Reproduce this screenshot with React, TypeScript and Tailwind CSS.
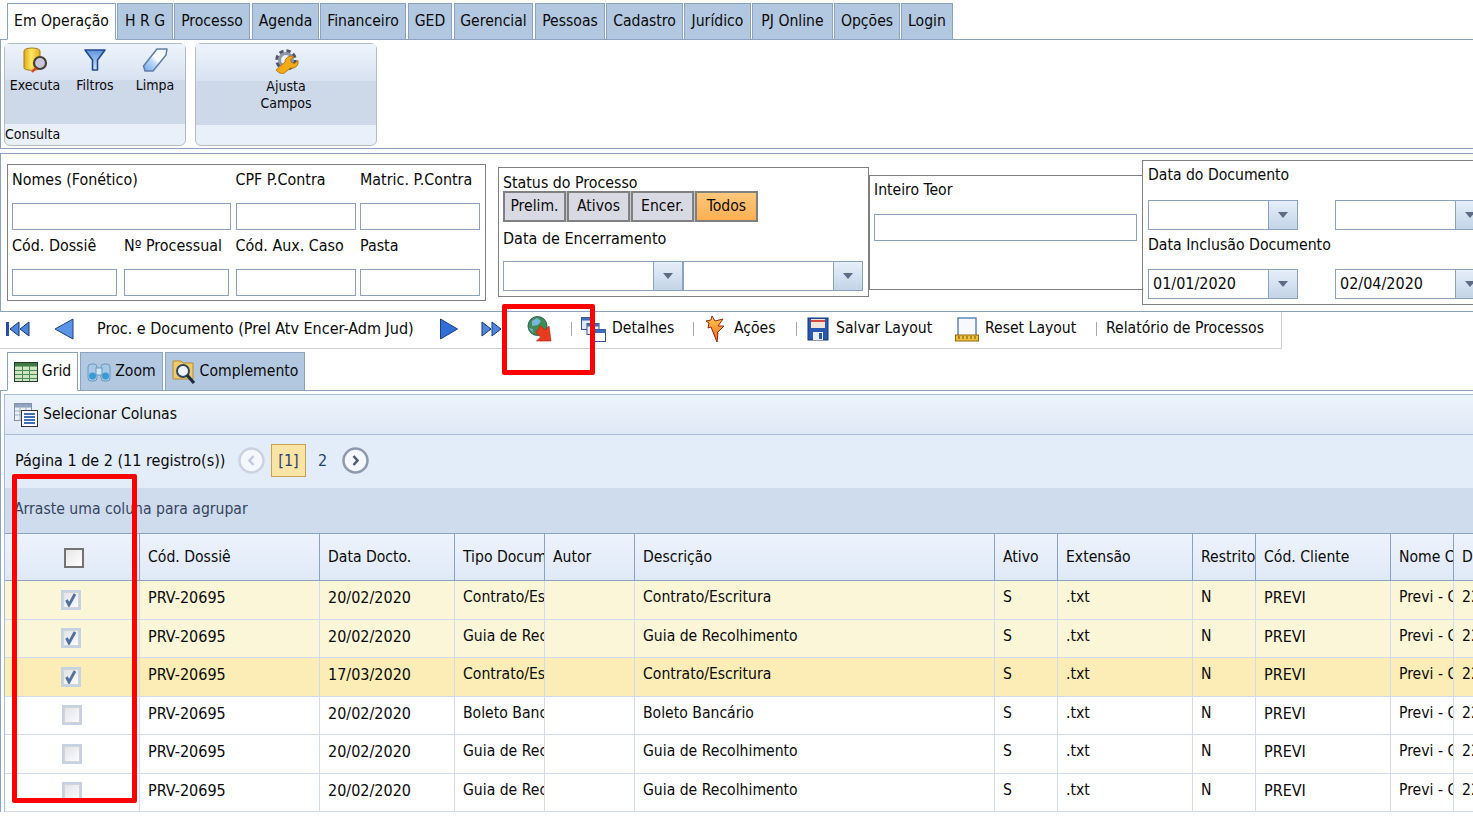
import type { ReactNode } from "react";

const navTabs = [
  { label: "Em Operação", w: "w-[109px]", active: true },
  { label: "H R G", w: "ml-px w-[56px]" },
  { label: "Processo", w: "ml-px w-[76px]" },
  { label: "Agenda", w: "ml-[2px] w-[67px]" },
  { label: "Financeiro", w: "ml-px w-[86px]" },
  { label: "GED", w: "ml-[2px] w-[44px]" },
  { label: "Gerencial", w: "ml-[2px] w-[79px]" },
  { label: "Pessoas", w: "ml-[2px] w-[70px]" },
  { label: "Cadastro", w: "ml-px w-[77px]" },
  { label: "Jurídico", w: "ml-px w-[67px]" },
  { label: "PJ Online", w: "ml-px w-[81px]" },
  { label: "Opções", w: "ml-px w-[66px]" },
  { label: "Login", w: "ml-px w-[52px]" },
];

const rows = [
  { date: "20/02/2020", tipo: "Contrato/Escritura", desc: "Contrato/Escritura", sel: 1 },
  { date: "20/02/2020", tipo: "Guia de Recolhimento", desc: "Guia de Recolhimento", sel: 1 },
  { date: "17/03/2020", tipo: "Contrato/Escritura", desc: "Contrato/Escritura", sel: 2 },
  { date: "20/02/2020", tipo: "Boleto Bancário", desc: "Boleto Bancário", sel: 0 },
  { date: "20/02/2020", tipo: "Guia de Recolhimento", desc: "Guia de Recolhimento", sel: 0 },
  { date: "20/02/2020", tipo: "Guia de Recolhimento", desc: "Guia de Recolhimento", sel: 0 },
];

const columns = [
  { label: "", w: "w-[135px]" },
  { label: "Cód. Dossiê", w: "w-[180px]" },
  { label: "Data Docto.", w: "w-[135px]" },
  { label: "Tipo Documento", w: "w-[90px]" },
  { label: "Autor", w: "w-[90px]" },
  { label: "Descrição", w: "w-[360px]" },
  { label: "Ativo", w: "w-[63px]" },
  { label: "Extensão", w: "w-[135px]" },
  { label: "Restrito", w: "w-[63px]" },
  { label: "Cód. Cliente", w: "w-[135px]" },
  { label: "Nome Cliente", w: "w-[63px]" },
  { label: "Data", w: "w-[40px]" },
];

function Arrow() {
  return (
    <span className="flex h-full w-[29px] shrink-0 items-center justify-center border-l border-[#8ba2c0] bg-gradient-to-b from-[#e6effa] to-[#c3d4e7]">
      <span className="h-0 w-0 border-x-[5px] border-t-[6px] border-x-transparent border-t-[#5f6b85]" />
    </span>
  );
}

function DateBox({ value, w }: { value?: string; w: string }) {
  return (
    <div className={`flex h-[30px] shrink-0 items-stretch border border-[#8ba2c0] bg-white text-[16px] ${w}`}>
      <span className="flex-1 px-1 leading-[28px]">{value}</span>
      <Arrow />
    </div>
  );
}

function TextBox({ w }: { w: string }) {
  return <div className={`h-[27px] shrink-0 border border-[#8ba2c0] bg-white ${w}`} />;
}

function DbIcon() {
  return (
    <svg width="26" height="26" viewBox="0 0 26 26">
      <defs>
        <linearGradient id="db" x1="0" x2="1" y1="0" y2="0">
          <stop offset="0" stopColor="#e0a820" />
          <stop offset=".45" stopColor="#ffe860" />
          <stop offset="1" stopColor="#e5ae22" />
        </linearGradient>
      </defs>
      <path d="M2 4c0-4 16-4 16 0v17c0 3-16 3-16 0z" fill="url(#db)" stroke="#a87a18" />
      <circle cx="18" cy="16" r="6" fill="#c9c8d8" stroke="#4a3f36" strokeWidth="2.2" />
      <path d="M14 21l-4 4" stroke="#d8432a" strokeWidth="2.4" />
    </svg>
  );
}

function FunnelIcon() {
  return (
    <svg width="24" height="24" viewBox="0 0 24 24">
      <defs>
        <linearGradient id="fn" x1="0" x2="0" y1="0" y2="1">
          <stop offset="0" stopColor="#5f93dc" />
          <stop offset="1" stopColor="#cfe6fb" />
        </linearGradient>
      </defs>
      <path d="M2 2h20l-7.5 10v10h-5V12z" fill="url(#fn)" stroke="#1f4a8f" strokeWidth="1.6" strokeLinejoin="round" />
    </svg>
  );
}

function EraserIcon() {
  return (
    <svg width="26" height="26" viewBox="0 0 26 26">
      <defs>
        <linearGradient id="er" x1="0" x2="1" y1="1" y2="0">
          <stop offset="0" stopColor="#6fa6e8" />
          <stop offset=".4" stopColor="#bcd8f6" />
          <stop offset=".55" stopColor="#fbfdff" />
          <stop offset="1" stopColor="#eef3fb" />
        </linearGradient>
      </defs>
      <path d="M1.500 19L15 2h10l-1 6L11 24H3z" fill="url(#er)" stroke="#5f7da5" strokeWidth="1.5" strokeLinejoin="round" />
    </svg>
  );
}

function GearIcon() {
  return (
    <svg width="26" height="26" viewBox="0 0 26 26">
      <circle cx="13" cy="12" r="8.500" fill="none" stroke="#4f5566" strokeWidth="4.500" strokeDasharray="4 2.700" />
      <circle cx="13" cy="12" r="6.500" fill="none" stroke="#8f96a8" strokeWidth="3" />
      <circle cx="13" cy="12" r="4" fill="#f4f6fa" />
      <path d="M3 22l9-8c0-4 4-7 9-5.500l-3.500 3 1 3 3 1 3.500-3c1 5-3 8.500-7.500 7.500l-6 5c-2.500 1.500-6.500-.5-8.500-3z" fill="#f4a916" stroke="#a8690c" strokeWidth=".8" />
    </svg>
  );
}

function FirstIcon() {
  return (
    <svg width="24" height="16" viewBox="0 0 24 16">
      <path d="M0 1h3v14H0z" fill="#244f9e" />
      <path d="M13 1v14L4 8zM23 1v14l-9-7z" fill="#4f86dc" stroke="#17367a" />
    </svg>
  );
}

function PrevIcon() {
  return (
    <svg width="22" height="22" viewBox="0 0 22 22">
      <path d="M20 1v20L2 11z" fill="#5b93e6" stroke="#1f3f85" strokeLinejoin="round" />
    </svg>
  );
}

function NextIcon() {
  return (
    <svg width="20" height="22" viewBox="0 0 20 22">
      <path d="M1.500 1v20L18.500 11z" fill="#2f6fd6" stroke="#1f3f85" strokeLinejoin="round" />
    </svg>
  );
}

function LastIcon() {
  return (
    <svg width="22" height="16" viewBox="0 0 22 16">
      <path d="M1 1v14l9-7zM11 1v14l9-7z" fill="#4f86dc" stroke="#17367a" />
    </svg>
  );
}

function GlobeIcon() {
  return (
    <svg width="26" height="26" viewBox="0 0 26 26">
      <circle cx="10.500" cy="10" r="9.500" fill="#3f8d55" stroke="#2c5f5a" />
      <path d="M5 5l5-3 4 3-3 4-6 1zM12 13l5 0-2 5-3-1zM1.500 12l4 1 1 4z" fill="#7cb6dc" />
      <path d="M13.500 9.500l4.500 4.500 4-4 2 15H9.500l4-4-4.500-4.500z" fill="#e83a1e" stroke="#b0200f" strokeWidth=".6" />
    </svg>
  );
}

function WindowsIcon() {
  return (
    <svg width="25" height="25" viewBox="0 0 25 25">
      <rect x=".5" y=".5" width="13" height="12" fill="#dfe7f3" stroke="#33508f" />
      <rect x=".5" y=".5" width="13" height="3" fill="#3f6cb8" />
      <rect x="6" y="6.500" width="12" height="11" fill="#eef3fa" stroke="#33508f" />
      <rect x="6" y="6.500" width="12" height="3" fill="#3f6cb8" />
      <rect x="11.500" y="12.500" width="13" height="12" fill="#ffffff" stroke="#33508f" />
      <rect x="11.500" y="12.500" width="13" height="3.500" fill="#3f6cb8" />
    </svg>
  );
}

function BoltIcon() {
  return (
    <svg width="22" height="28" viewBox="0 0 22 28">
      <defs>
        <linearGradient id="bolt" x1="0" x2="0" y1="0" y2="1">
          <stop offset="0" stopColor="#ffd34a" />
          <stop offset="1" stopColor="#ee5a22" />
        </linearGradient>
      </defs>
      <path d="M2 6l5-1 1-4 3 5 8-2-5 7 6 0-7 7 1 0-1 9-6-15-3 1 1-5z" fill="url(#bolt)" stroke="#9c2418" />
    </svg>
  );
}

function FloppyIcon() {
  return (
    <svg width="22" height="24" viewBox="0 0 22 24">
      <rect x="1" y="1" width="20" height="22" fill="#2a57b0" stroke="#143777" />
      <rect x="4" y="2" width="14" height="9" fill="#f1e4d8" />
      <rect x="4" y="3" width="14" height="2" fill="#d8483c" />
      <rect x="6" y="15" width="10" height="8" fill="#e9eef6" />
      <rect x="12" y="16" width="3" height="6" fill="#2a57b0" />
    </svg>
  );
}

function RulerIcon() {
  return (
    <svg width="24" height="25" viewBox="0 0 24 25">
      <rect x="3" y="1" width="18" height="18" fill="#f7f9fd" stroke="#5c86c2" strokeWidth="1.500" />
      <rect x=".5" y="18" width="23" height="6" fill="#f0c13a" stroke="#8f6a10" />
      <path d="M4 19v3M8 19v3M12 19v3M16 19v3M20 19v3" stroke="#6c4e08" />
    </svg>
  );
}

function GridIcon() {
  return (
    <svg width="24" height="20" viewBox="0 0 24 20">
      <rect x=".5" y=".5" width="23" height="19" fill="#cfe4c4" stroke="#26382c" />
      <rect x="1" y="1" width="22" height="3.500" fill="#3f7a45" />
      <path d="M1 8.500h22M1 12.500h22M1 16.500h22M8.500 4v15M15.500 4v15" stroke="#4b8a52" />
    </svg>
  );
}

function BinocularsIcon() {
  return (
    <svg width="24" height="22" viewBox="0 0 24 22">
      <rect x="1" y="3" width="9" height="17" rx="3" fill="#a5c9e6" stroke="#6d98bd" />
      <rect x="14" y="3" width="9" height="17" rx="3" fill="#a5c9e6" stroke="#6d98bd" />
      <rect x="9" y="7" width="6" height="7" fill="#d3e4f3" stroke="#6d98bd" />
      <circle cx="5.500" cy="15" r="3.500" fill="#3a9ad4" />
      <circle cx="18.500" cy="15" r="3.500" fill="#3a9ad4" />
    </svg>
  );
}

function FolderSearchIcon() {
  return (
    <svg width="24" height="24" viewBox="0 0 24 24">
      <path d="M1 1h8l2 2h10v16H1z" fill="#eecb6e" stroke="#b58a2a" />
      <circle cx="11" cy="11" r="6" fill="#eaf2fb" stroke="#33465e" strokeWidth="2" />
      <path d="M15 15l7 8" stroke="#1f2d40" strokeWidth="3.200" />
    </svg>
  );
}

function ColumnsIcon() {
  return (
    <svg width="24" height="24" viewBox="0 0 24 24">
      <rect x=".5" y=".5" width="17" height="17" fill="#eaf0f8" stroke="#7f90ab" />
      <rect x="1" y="1" width="16" height="3.500" fill="#8ea2c0" />
      <path d="M1 8h17M1 12h17M6 1v17M12 1v17" stroke="#a0aec4" />
      <rect x="7.500" y="7.500" width="16" height="16" fill="#ffffff" stroke="#333333" />
      <path d="M10 11h11M10 14h11M10 17h11M10 20h11" stroke="#3f6cb8" strokeWidth="2" />
    </svg>
  );
}

function RibbonButton({ icon, children, w }: { icon: ReactNode; children: ReactNode; w: string }) {
  return (
    <div className={`flex flex-col items-center ${w}`}>
      <span className="flex h-[34px] items-center">{icon}</span>
      <span className="text-center text-[14px] leading-[17px]">{children}</span>
    </div>
  );
}

function RibbonGroup({ title, children, className }: { title?: string; children: ReactNode; className: string }) {
  return (
    <div className={`flex h-[103px] w-[182px] flex-col rounded-md border border-[#b5bcc6] bg-[#e9f0fa] ${className}`}>
      <div className="h-[37px] bg-gradient-to-b from-[#edf3fb] to-[#d8e3f1]" />
      <div className="flex h-[44px] flex-none bg-[#cdd8e8]" />
      <div className="-mt-[81px] flex h-[81px] justify-center">{children}</div>
      <div className="flex-1 pt-[1px] text-[14px] leading-[22px]">{title}</div>
    </div>
  );
}

function ToolItem({ icon, label, className }: { icon: ReactNode; label: string; className: string }) {
  return (
    <div className={`flex shrink-0 items-center ${className}`}>
      {icon}
      <span>{label}</span>
    </div>
  );
}

function Sep() {
  return <span className="block h-[14px] w-px shrink-0 bg-[#a8a8a8]" />;
}

function PagerCircle({ dim, back }: { dim?: boolean; back?: boolean }) {
  return (
    <svg width="27" height="27" viewBox="0 0 27 27" className="shrink-0">
      <circle cx="13.500" cy="13.500" r="12" fill="#f4f7fc" stroke={dim ? "#c9d3e0" : "#8d99ac"} strokeWidth="2.500" />
      <path d={back ? "M15.500 9l-4 4.500 4 4.500" : "M11.500 9l4 4.500-4 4.500"} fill="none" stroke={dim ? "#c0cbda" : "#4d5a70"} strokeWidth="2.500" />
    </svg>
  );
}

function SubTab({ icon, label, w, active }: { icon: ReactNode; label: string; w: string; active?: boolean }) {
  return (
    <div className={`relative flex h-[39px] shrink-0 items-center justify-center gap-[4px] border border-[#8ba2c0] ${w} ${active ? "border-b-white bg-white" : "bg-[#b2c8e0]"}`}>
      {icon}
      <span>{label}</span>
    </div>
  );
}

function CheckBox({ checked }: { checked: boolean }) {
  return (
    <span className={`flex h-[20px] w-[20px] items-center justify-center border-2 border-[#c5d2e4] ${checked ? "" : "ml-[2px]"}`}>
      <span className="flex h-[16px] w-[16px] items-center justify-center border border-[#d2d4d8] bg-gradient-to-br from-[#e2e4e8] to-[#fbfbfc]">
        {checked && (
          <svg width="14" height="14" viewBox="0 0 14 14">
            <path d="M2.500 7l2.500 5 6-11" fill="none" stroke="#51709f" strokeWidth="2.800" />
          </svg>
        )}
      </span>
    </span>
  );
}

export default function App() {
  return (
    <div className="relative h-[816px] w-[1473px] overflow-hidden bg-white font-['DejaVu_Sans',sans-serif] text-[15.6px] text-[#0a0a0a] [font-stretch:condensed]">
      {/* top menu */}
      <div className="flex h-[40px] border-b border-[#8ba2c0] pl-[7px] pt-[3px]">
        {navTabs.map((tab) => (
          <div
            key={tab.label}
            className={`flex h-[37px] shrink-0 items-center justify-center border border-[#8ba2c0] pt-px ${tab.w} ${tab.active ? "border-b-white bg-white" : "bg-[#b2c8e0]"}`}
          >
            {tab.label}
          </div>
        ))}
      </div>

      {/* ribbon */}
      <div className="flex h-[109px] gap-[9px] border-b border-l border-[#8ba2c0] pl-[3px] pt-[3px]">
        <RibbonGroup title="Consulta" className="shrink-0">
          <RibbonButton icon={<DbIcon />} w="w-[60px]">Executa</RibbonButton>
          <RibbonButton icon={<FunnelIcon />} w="w-[60px]">Filtros</RibbonButton>
          <RibbonButton icon={<EraserIcon />} w="w-[60px]">Limpa</RibbonButton>
        </RibbonGroup>
        <RibbonGroup className="shrink-0">
          <RibbonButton icon={<GearIcon />} w="w-[80px]">Ajusta<br />Campos</RibbonButton>
        </RibbonGroup>
      </div>

      {/* filters */}
      <div className="mt-[4px] flex h-[159px] items-start border-y border-l border-[#8ba2c0] pl-[6px]">
        <div className="mt-[10px] h-[137px] w-[479px] shrink-0 border border-[#808080] pl-[4px] text-[15.9px]">
          <div className="flex h-[38px] pt-[3px]">
            <span className="w-[223.5px]">Nomes (Fonético)</span>
            <span className="w-[124.5px]">CPF P.Contra</span>
            <span>Matric. P.Contra</span>
          </div>
          <div className="flex">
            <TextBox w="w-[219px]" />
            <TextBox w="ml-[5px] w-[120px]" />
            <TextBox w="ml-[4px] w-[120px]" />
          </div>
          <div className="flex h-[39px] pt-[4px]">
            <span className="w-[112px]">Cód. Dossiê</span>
            <span className="w-[111.5px]">Nº Processual</span>
            <span className="w-[124.5px]">Cód. Aux. Caso</span>
            <span>Pasta</span>
          </div>
          <div className="flex">
            <TextBox w="w-[105px]" />
            <TextBox w="ml-[7px] w-[105px]" />
            <TextBox w="ml-[7px] w-[120px]" />
            <TextBox w="ml-[4px] w-[120px]" />
          </div>
        </div>

        <div className="ml-[12px] mt-[13px] h-[130px] w-[371px] shrink-0 border border-[#808080] px-[4px] pt-[6px]">
          <div className="text-[15.8px] leading-[17px]">Status do Processo</div>
          <div className="flex h-[31px] w-[255px] gap-px bg-[#c4c4cc]">
            <span className="flex w-[63px] items-center justify-center border-2 border-[#808080] bg-[#d9d9e4]">Prelim.</span>
            <span className="flex w-[63px] items-center justify-center border-2 border-[#808080] bg-[#d9d9e4]">Ativos</span>
            <span className="flex w-[63px] items-center justify-center border-2 border-[#808080] bg-[#d9d9e4]">Encer.</span>
            <span className="flex w-[63px] items-center justify-center border-2 border-[#808080] bg-gradient-to-b from-[#fdc77b] to-[#fdaf50]">Todos</span>
          </div>
          <div className="mt-[7px] h-[32px] text-[16px] leading-[20px]">Data de Encerramento</div>
          <div className="flex">
            <DateBox w="w-[180px]" />
            <DateBox w="w-[180px]" />
          </div>
        </div>

        <div className="mt-[21px] h-[115px] w-[273px] shrink-0 border-y border-l border-[#808080] pl-[4px] pt-[3px]">
          <div className="h-[35px]">Inteiro Teor</div>
          <TextBox w="w-[263px]" />
        </div>

        <div className="mt-[6px] h-[145px] w-[340px] shrink-0 border border-[#808080] pl-[5px]">
          <div className="h-[39px] pt-[3px]">Data do Documento</div>
          <div className="flex gap-[37px]">
            <DateBox w="w-[150px]" />
            <DateBox w="w-[150px]" />
          </div>
          <div className="h-[39px] pt-[3px] text-[15.7px]">Data Inclusão Documento</div>
          <div className="flex gap-[37px]">
            <DateBox value="01/01/2020" w="w-[150px]" />
            <DateBox value="02/04/2020" w="w-[150px]" />
          </div>
        </div>
      </div>

      {/* toolbar */}
      <div className="flex h-[37px] w-[1282px] items-center border-r border-b border-[#d0d0d0] pb-[2px] pl-[6px]">
        <FirstIcon />
        <span className="ml-[23px]"><PrevIcon /></span>
        <span className="ml-[22px] w-[318px] shrink-0 whitespace-nowrap text-[16px]">Proc. e Documento (Prel Atv Encer-Adm Jud)</span>
        <span className="ml-[24px]"><NextIcon /></span>
        <span className="ml-[22px]"><LastIcon /></span>
        <span className="ml-[24px]"><GlobeIcon /></span>
        <span className="ml-[18px]"><Sep /></span>
        <ToolItem icon={<WindowsIcon />} label="Detalhes" className="ml-[9px] w-[112px] gap-[6px]" />
        <Sep />
        <ToolItem icon={<BoltIcon />} label="Ações" className="ml-[10px] w-[92px] gap-[8px]" />
        <Sep />
        <ToolItem icon={<FloppyIcon />} label="Salvar Layout" className="ml-[10px] w-[148px] gap-[7px]" />
        <ToolItem icon={<RulerIcon />} label="Reset Layout" className="w-[141px] gap-[6px]" />
        <Sep />
        <span className="ml-[9px] whitespace-nowrap">Relatório de Processos</span>
      </div>

      {/* tabs */}
      <div className="mt-[3px] flex h-[38px] pl-[7px]">
        <SubTab icon={<GridIcon />} label="Grid" w="w-[71px]" active />
        <SubTab icon={<BinocularsIcon />} label="Zoom" w="ml-[2px] w-[83px]" />
        <SubTab icon={<FolderSearchIcon />} label="Complemento" w="ml-[2px] w-[140px]" />
      </div>

      {/* grid panel */}
      <div className="border-t border-l border-[#8ba2c0] pl-[3px] pt-[3px]">
        <div className="border-t border-l border-[#a9bdd6]">
          <div className="flex h-[40px] items-center gap-[5px] border-b border-[#a9bdd6] bg-gradient-to-b from-[#edf3fb] to-[#dfe9f6] pl-[9px]">
            <ColumnsIcon />
            <span>Selecionar Colunas</span>
          </div>
          <div className="flex h-[53px] items-center bg-[#e3edf9] pb-[2px] pl-[10px] text-[16px]">
            <span className="w-[223px] shrink-0 whitespace-nowrap">Página 1 de 2 (11 registro(s))</span>
            <PagerCircle dim back />
            <span className="ml-[6px] flex h-[33px] w-[35px] items-center justify-center border border-[#c8a24c] bg-[#f9e4a5] text-[#26426e]">[1]</span>
            <span className="ml-[12px] w-[24px] text-[#26426e]">2</span>
            <PagerCircle />
          </div>
          <div className="flex h-[46px] items-center border-b border-[#8ba2c0] bg-[#cfdcee] pb-[2px] pl-[9px] text-[#36465f]">Arraste uma coluna para agrupar</div>

          {/* table */}
          <div className="flex h-[47px] border-b border-[#8ba2c0] bg-gradient-to-b from-[#edf3fd] to-[#dfe9f6]">
            {columns.map((col, i) => (
              <div key={i} className={`flex shrink-0 items-center overflow-hidden whitespace-nowrap border-r border-[#8ba2c0] pl-[8px] pt-px ${col.w} ${i === 0 ? "justify-center" : ""}`}>
                {i === 0 ? (
                  <span className="-ml-[5px] h-[20px] w-[20px] border-2 border-[#737373] bg-gradient-to-br from-[#e6e6e6] to-white" />
                ) : col.label}
              </div>
            ))}
          </div>
          {rows.map((row, r) => {
            const bg = row.sel === 2 ? "bg-[#fbedb5]" : row.sel === 1 ? "bg-[#fcf6d8]" : "bg-white";
            const cells = ["PRV-20695", row.date, row.tipo, "", row.desc, "S", ".txt", "N", "PREVI", "Previ - Caixa", "22/"];
            return (
              <div key={r} className={`flex h-[38.5px] border-b border-[#d0dcee] ${bg}`}>
                <div className="flex w-[135px] shrink-0 items-center justify-center border-r border-[#d0dcee] pr-[3px]">
                  <CheckBox checked={row.sel > 0} />
                </div>
                {cells.map((text, i) => (
                  <div key={i} className={`shrink-0 overflow-hidden whitespace-nowrap border-r border-[#d0dcee] pl-[8px] pt-[5px] ${columns[i + 1].w} ${i < 2 || i === 8 ? "text-[16px]" : ""}`}>
                    {text}
                  </div>
                ))}
              </div>
            );
          })}
        </div>
      </div>

      {/* red marks drawn over the screenshot */}
      <div className="absolute left-[502px] top-[304px] h-[71px] w-[93px] rounded-[2px] border-[5px] border-[#ff0000]" />
      <div className="absolute left-[12px] top-[474px] h-[329px] w-[125px] rounded-[2px] border-[5px] border-[#ff0000]" />
    </div>
  );
}
